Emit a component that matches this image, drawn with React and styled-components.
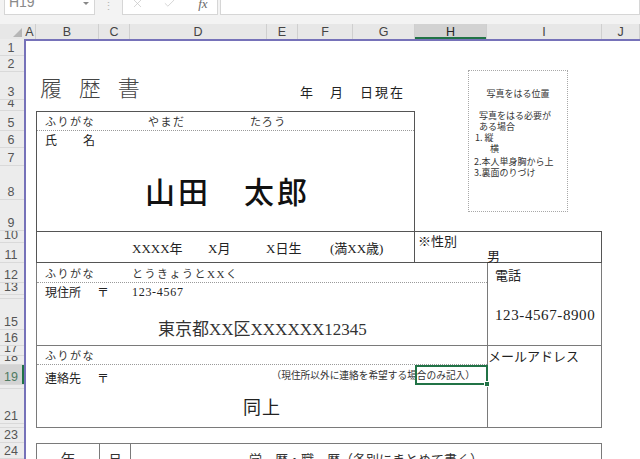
import React from "react";
import styled, { createGlobalStyle } from "styled-components";
import { X, Check } from "lucide-react";

const JP = `"Noto Sans CJK JP", "Noto Sans", sans-serif`;
const SERIF = `"Liberation Serif", "Noto Sans CJK JP", serif`;
const UI = `"Liberation Sans", "Noto Sans CJK JP", sans-serif`;

const GREEN = "#217346";
const PURPLE = "#7672b9";

const ROW_HEIGHTS = [15, 16, 28, 11, 20, 17, 18, 34, 31, 12, 20, 20, 12, 4, 31, 16, 10, 9, 20, 4, 35, 4, 15, 16, 14];
const ROWS_TEMPLATE = ROW_HEIGHTS.map((h) => `${h}px`).join(" ");
const MID_COLS = "63px 31px 137px 31px 55px 62px 72px 115px 1fr";
const COL_LETTERS = ["A", "B", "C", "D", "E", "F", "G", "H", "I", "J"];

const GlobalStyle = createGlobalStyle`
  *, *::before, *::after { box-sizing: border-box; }
  html, body { margin: 0; padding: 0; background: #fff; }
  body { font-family: ${JP}; color: #222; }
`;

const Window = styled.div`
  width: 640px;
  height: 459px;
  overflow: hidden;
  display: flex;
  flex-direction: column;
  background: #fff;
`;

/* ---------- formula bar ---------- */
const FormulaBar = styled.div`
  height: 24px;
  flex: none;
  display: flex;
  align-items: flex-start;
  padding-left: 4px;
  background: #f3f3f3;
`;

const BarBox = styled.div`
  height: 15px;
  width: ${(p) => (p.$w ? `${p.$w}px` : "auto")};
  flex: ${(p) => (p.$w ? "none" : "1")};
  margin-left: ${(p) => p.$ml || 0}px;
  background: #fff;
  border: 1px solid #d6d6d6;
  border-top: none;
  display: flex;
  align-items: flex-end;
  overflow: hidden;
  gap: ${(p) => p.$gap || 0}px;
  padding-left: ${(p) => p.$pl || 0}px;
`;

const NameBoxText = styled.span`
  flex: 1;
  font-family: ${UI};
  font-size: 14px;
  line-height: 14px;
  color: #8a8a8a;
  margin-bottom: 5px;
`;

const DropArrow = styled.span`
  width: 0;
  height: 0;
  border-left: 3px solid transparent;
  border-right: 3px solid transparent;
  border-top: 3px solid #888;
  margin: 0 5px 9px 0;
`;

const BarDivider = styled.div`
  width: 27px;
  flex: none;
  text-align: center;
  font-family: ${UI};
  font-size: 11px;
  line-height: 11px;
  color: #b5b5b5;
  margin-top: 1px;
`;

const FxIcon = styled.span`
  display: flex;
  margin-bottom: 4px;
  color: #c4c4c4;
`;

const FxLabel = styled.span`
  font-family: ${SERIF};
  font-style: italic;
  font-size: 13px;
  line-height: 13px;
  color: #6a6a6a;
  margin-bottom: 4px;
`;

/* ---------- headers ---------- */
const HeaderBand = styled.div`
  height: 15px;
  flex: none;
  display: flex;
  background: #e7e7e7;
`;

const Corner = styled.div`
  width: 24px;
  flex: none;
  display: flex;
  align-items: flex-end;
  justify-content: flex-end;
  padding: 0 2px 2px 0;
`;

const CornerTriangle = styled.span`
  width: 0;
  height: 0;
  border-left: 9px solid transparent;
  border-bottom: 9px solid #b6b6b6;
`;

const ColHeads = styled.div`
  flex: 1;
  display: grid;
  grid-template-columns: 12px ${MID_COLS};
`;

const ColHead = styled.div`
  display: flex;
  align-items: center;
  justify-content: center;
  font-family: ${UI};
  font-size: 12.5px;
  color: ${(p) => (p.$sel ? "#262626" : "#444")};
  background: ${(p) => (p.$sel ? "#d2d2d2" : "transparent")};
  border-right: 1px solid #cfcfcf;
  box-shadow: ${(p) => (p.$sel ? `inset 0 -2px ${GREEN}` : "none")};
  overflow: hidden;
`;

const Body = styled.div`
  flex: 1;
  min-height: 0;
  display: flex;
`;

const RowHeads = styled.div`
  width: 24px;
  flex: none;
  display: grid;
  grid-template-rows: ${ROWS_TEMPLATE};
  align-content: start;
  padding-top: 2px;
  background: #ececec;
`;

const RowHead = styled.div`
  display: flex;
  align-items: flex-end;
  justify-content: center;
  padding-right: 2px;
  overflow: hidden;
  font-family: ${UI};
  font-size: 12.5px;
  line-height: 13px;
  color: ${(p) => (p.$sel ? "#4f7a62" : "#555")};
  background: ${(p) => (p.$sel ? "#d3d3d3" : "transparent")};
  border-bottom: 1px solid #d9d9d9;
  box-shadow: ${(p) => (p.$sel ? `inset -2px 0 ${GREEN}` : "none")};
`;

/* ---------- sheet ---------- */
const Sheet = styled.div`
  flex: 1;
  position: relative;
  display: grid;
  grid-template-columns: 10px ${MID_COLS};
  grid-template-rows: ${ROWS_TEMPLATE};
  align-content: start;
  border-top: 2px solid ${PURPLE};
  border-left: 2px solid ${PURPLE};
`;

const Cell = styled.div`
  grid-column: ${(p) => p.$c};
  grid-row: ${(p) => p.$r};
  min-width: 0;
  min-height: 0;
`;

const Title = styled(Cell)`
  display: flex;
  align-items: center;
  padding-left: 4px;
  font-size: 22px;
  font-weight: 300;
  letter-spacing: 6px;
  color: #444;
  white-space: nowrap;
`;

const AsOfDate = styled(Cell)`
  display: flex;
  align-items: flex-end;
  padding: 0 0 2px 2px;
  font-size: 13px;
  line-height: 13px;
  letter-spacing: 2px;
  white-space: nowrap;
`;

const PhotoNote = styled.div`
  position: absolute;
  left: 442px;
  top: 29px;
  width: 100px;
  height: 142px;
  border: 1px dotted #a8a8a8;
  padding-top: 17px;
  display: flex;
  flex-direction: column;
  color: #333;
`;

const PhotoLine = styled.div`
  font-size: 9px;
  line-height: 11px;
  white-space: nowrap;
  text-align: ${(p) => (p.$center ? "center" : "left")};
  padding-left: ${(p) => p.$indent || 0}px;
  margin-top: ${(p) => p.$gap || 0}px;
`;

const Frame = styled(Cell)`
  display: flex;
  flex-direction: column;
  border-style: solid;
  border-color: ${(p) => (p.$dark ? "#555" : "#7a7a7a")};
  border-width: ${(p) => p.$bw};
`;

const FuriRow = styled.div`
  height: ${(p) => p.$h}px;
  flex: none;
  display: flex;
  align-items: center;
  padding-left: 8px;
  border-bottom: 1px dotted #9a9a9a;
  font-size: 11px;
  letter-spacing: 1.5px;
  color: #333;
`;

const Slot = styled.span`
  flex: none;
  width: ${(p) => (p.$w ? `${p.$w}px` : "auto")};
  white-space: nowrap;
  font-family: ${(p) => (p.$serif ? SERIF : JP)};
  margin-top: ${(p) => p.$mt || 0}px;
  letter-spacing: ${(p) => (p.$ls !== undefined ? `${p.$ls}px` : "inherit")};
`;

const NameArea = styled.div`
  height: 100px;
  flex: none;
  display: flex;
  flex-direction: column;
`;

const FieldLabel = styled.div`
  height: ${(p) => p.$h}px;
  flex: none;
  display: flex;
  align-items: center;
  padding-left: 8px;
  font-size: 12px;
  line-height: 12px;
  letter-spacing: 0.7px;
  color: #222;
`;

const BigName = styled.div`
  flex: 1;
  display: flex;
  align-items: center;
  padding-left: 108px;
  font-size: 30px;
  font-weight: 500;
  letter-spacing: 3px;
  color: #111;
  white-space: nowrap;
`;

const BirthRow = styled.div`
  flex: 1;
  display: flex;
  align-items: center;
  padding-left: 95px;
  border-top: 1px solid #555;
  font-family: ${SERIF};
  font-size: 13px;
  color: #222;
`;

const CellText = styled.div`
  font-size: ${(p) => p.$size}px;
  line-height: ${(p) => p.$size}px;
  padding: ${(p) => p.$pad};
  font-family: ${(p) => (p.$serif ? SERIF : JP)};
  letter-spacing: ${(p) => p.$ls || 0}px;
  white-space: nowrap;
  color: #222;
`;

const AddressLine = styled.div`
  flex: 1;
  display: flex;
  align-items: center;
  padding: 6px 0 0 121px;
  font-family: ${SERIF};
  font-size: 17px;
  color: #333;
  white-space: nowrap;
`;

const ContactRow = styled.div`
  height: 20px;
  flex: none;
  display: flex;
  align-items: flex-start;
  padding-left: 8px;
  font-size: 12px;
  line-height: 12px;
`;

const Note = styled.span`
  margin: 5px 12px 0 auto;
  font-size: 9.7px;
  line-height: 10px;
  white-space: nowrap;
  color: #333;
`;

const SameAbove = styled.div`
  flex: 1;
  display: flex;
  align-items: center;
  padding-left: 206px;
  font-size: 18px;
  letter-spacing: 1px;
  color: #222;
`;

const Selection = styled(Cell)`
  position: relative;
  z-index: 2;
  border: 2px solid ${GREEN};
  margin: 0 -1px 0 0;
`;

const FillHandle = styled.span`
  position: absolute;
  right: -4px;
  bottom: -4px;
  width: 6px;
  height: 6px;
  background: ${GREEN};
  border: 1px solid #fff;
`;

const HistoryHead = styled(Cell)`
  display: grid;
  grid-template-columns: 62px 31px 1fr;
  border: 1px solid #7a7a7a;
  border-bottom: none;
`;

const HistoryCell = styled.div`
  display: flex;
  align-items: center;
  justify-content: center;
  border-left: ${(p) => (p.$first ? "none" : "1px solid #7a7a7a")};
  font-size: ${(p) => p.$size}px;
  color: #333;
  white-space: nowrap;
`;

export default function App() {
  return (
    <>
      <GlobalStyle />
      <Window>
        <FormulaBar>
          <BarBox $w={91}>
            <NameBoxText>&nbsp;H19</NameBoxText>
            <DropArrow />
          </BarBox>
          <BarDivider>⋮</BarDivider>
          <BarBox $w={96} $pl={8} $gap={19}>
            <FxIcon><X size={13} strokeWidth={1.3} /></FxIcon>
            <FxIcon><Check size={13} strokeWidth={1.3} /></FxIcon>
            <FxLabel>&nbsp;fx</FxLabel>
          </BarBox>
          <BarBox $ml={2} />
        </FormulaBar>

        <HeaderBand>
          <Corner>
            <CornerTriangle />
          </Corner>
          <ColHeads>
            {COL_LETTERS.map((l) => (
              <ColHead key={l} $sel={l === "H"}>{l}</ColHead>
            ))}
          </ColHeads>
        </HeaderBand>

        <Body>
          <RowHeads>
            {ROW_HEIGHTS.map((_, i) => (
              <RowHead key={i} $sel={i + 1 === 19}>{i + 1}</RowHead>
            ))}
          </RowHeads>

          <Sheet>
            <Title $c="2 / 5" $r="3">履 歴 書</Title>
            <AsOfDate $c="6 / 8" $r="3">年　月　日現在</AsOfDate>

            <PhotoNote>
              <PhotoLine $center>写真をはる位置</PhotoLine>
              <PhotoLine $indent={10} $gap={11}>写真をはる必要が</PhotoLine>
              <PhotoLine $indent={10}>ある場合</PhotoLine>
              <PhotoLine $indent={6}>1. 縦</PhotoLine>
              <PhotoLine $indent={21}>横</PhotoLine>
              <PhotoLine $indent={5} $gap={2}>2.本人単身胸から上</PhotoLine>
              <PhotoLine $indent={5}>3.裏面のりづけ</PhotoLine>
            </PhotoNote>

            <Frame $c="2 / 8" $r="5 / 12" $dark $bw="1px">
              <FuriRow $h={19}>
                <Slot $w={103}>ふりがな</Slot>
                <Slot $w={102}>やまだ</Slot>
                <Slot>たろう</Slot>
              </FuriRow>
              <NameArea>
                <FieldLabel $h={17}>氏　　名</FieldLabel>
                <BigName>山田　太郎</BigName>
              </NameArea>
              <BirthRow>
                <Slot $serif $w={76}>XXXX年</Slot>
                <Slot $serif $w={58}>X月</Slot>
                <Slot $serif $w={64}>X日生</Slot>
                <Slot $serif>(満XX歳)</Slot>
              </BirthRow>
            </Frame>

            <Frame $c="8 / 10" $r="10 / 12" $dark $bw="1px 1px 1px 0">
              <CellText $size={13} $pad="2px 0 0 3px">※性別</CellText>
              <CellText $size={13} $pad="2px 0 0 72px">男</CellText>
            </Frame>

            <Frame $c="2 / 9" $r="12 / 17" $bw="0 0 1px 1px">
              <FuriRow $h={20}>
                <Slot $w={87}>ふりがな</Slot>
                <Slot $serif>とうきょうとXXく</Slot>
              </FuriRow>
              <ContactRow>
                <Slot $w={52} $mt={3}>現住所</Slot>
                <Slot $w={35} $mt={3}>〒</Slot>
                <Slot $serif $mt={3} $ls={0.7}>123-4567</Slot>
              </ContactRow>
              <AddressLine>東京都XX区XXXXXX12345</AddressLine>
            </Frame>

            <Frame $c="9 / 10" $r="12 / 17" $bw="0 1px 1px 1px">
              <CellText $size={13} $pad="5px 0 0 7px">電話</CellText>
              <CellText $size={15} $serif $ls={0.6} $pad="27px 0 0 7px">123-4567-8900</CellText>
            </Frame>

            <Frame $c="2 / 9" $r="17 / 23" $bw="0 0 1px 1px">
              <FuriRow $h={19}>
                <Slot>ふりがな</Slot>
              </FuriRow>
              <ContactRow>
                <Slot $w={52} $mt={7}>連絡先</Slot>
                <Slot $w={35} $mt={7}>〒</Slot>
                <Note>（現住所以外に連絡を希望する場合のみ記入）</Note>
              </ContactRow>
              <SameAbove>同上</SameAbove>
            </Frame>

            <Frame $c="9 / 10" $r="17 / 23" $bw="0 1px 1px 1px">
              <CellText $size={13} $pad="3px 0 0 0">メールアドレス</CellText>
            </Frame>

            <Selection $c="8 / 9" $r="19 / 20">
              <FillHandle />
            </Selection>

            <HistoryHead $c="2 / 10" $r="24 / 26">
              <HistoryCell $first $size={15}>年</HistoryCell>
              <HistoryCell $size={14}>月</HistoryCell>
              <HistoryCell $size={13}>学　歴・職　歴（各別にまとめて書く）</HistoryCell>
            </HistoryHead>
          </Sheet>
        </Body>
      </Window>
    </>
  );
}
